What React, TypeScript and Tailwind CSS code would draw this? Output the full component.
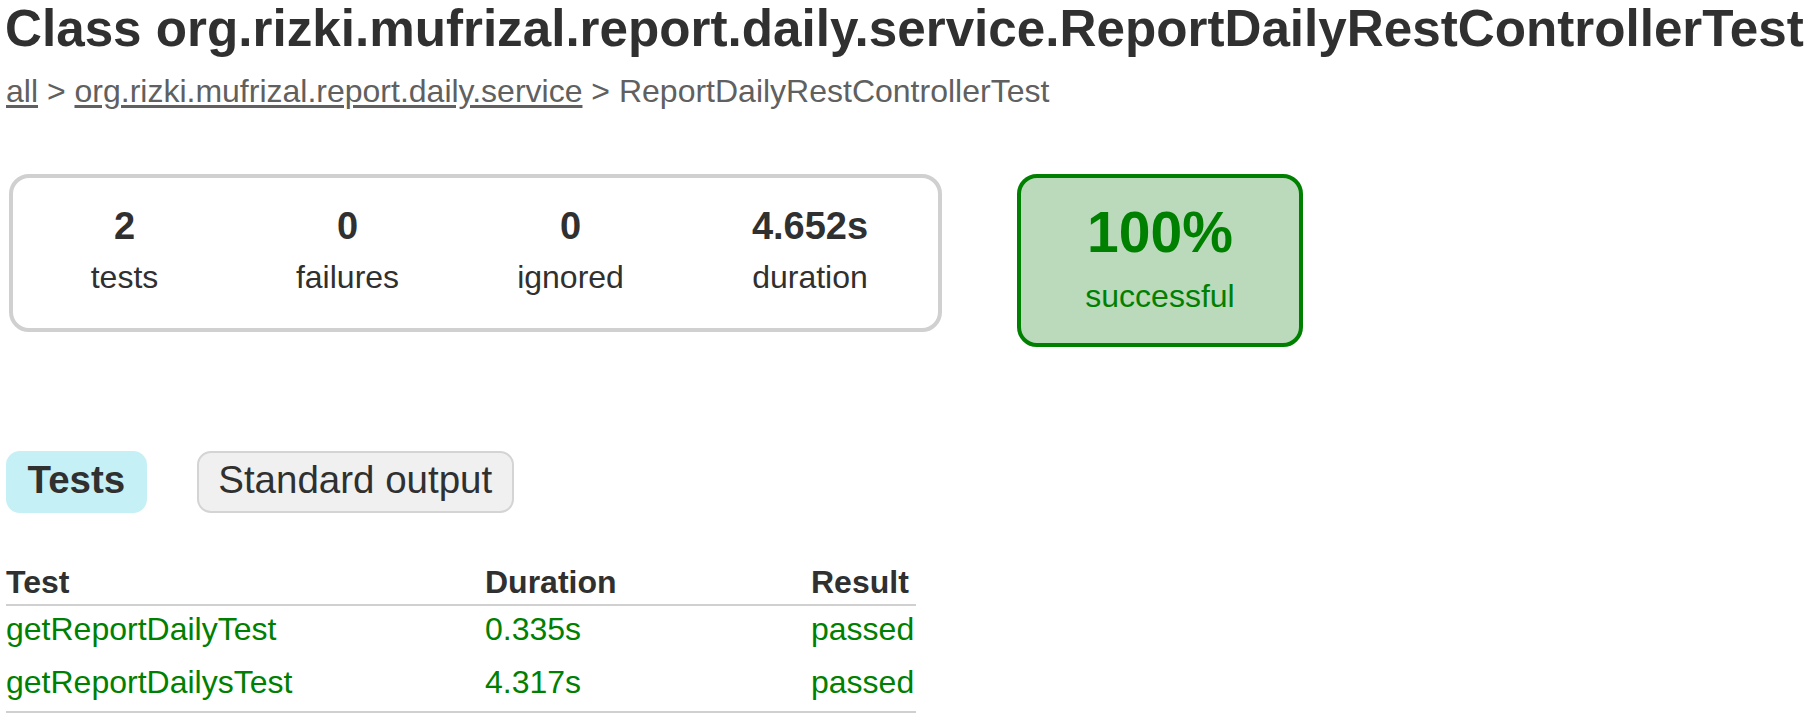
import React from "react";

const counters = [
    {value: "2", label: "tests", width: "w-[223px]"},
    {value: "0", label: "failures", width: "w-[223px]"},
    {value: "0", label: "ignored", width: "w-[223px]"},
    {value: "4.652s", label: "duration", width: "w-[256px]"},
];

const tests = [
    {name: "getReportDailyTest", duration: "0.335s", result: "passed"},
    {name: "getReportDailysTest", duration: "4.317s", result: "passed"},
];

const InfoBox = ({value, label, width}: {value: string; label: string; width: string}) => {
    return (
        <div className={`${width} text-center pt-[26px] pb-[33px]`}>
            <p className="text-[38px] leading-[44px] font-bold">{value}</p>
            <p className="mt-[11px] text-[32px] leading-[36px]">{label}</p>
        </div>
    );
};

const App = () => {
    return (
        <div className="min-h-screen bg-white pl-[6px] font-['Liberation_Sans',Arial,sans-serif] text-[#303030]">
            <h1 className="whitespace-nowrap text-[51.2px] leading-[58px] font-bold -ml-[1px]">
                Class org.rizki.mufrizal.report.daily.service.ReportDailyRestControllerTest
            </h1>

            <div className="mt-[15px] whitespace-nowrap text-[32px] leading-[36px] text-[#606060]">
                <a href="#" className="underline underline-offset-[3px]">all</a>
                {" > "}
                <a href="#" className="underline underline-offset-[3px]">org.rizki.mufrizal.report.daily.service</a>
                {" > "}ReportDailyRestControllerTest
            </div>

            {/* summary */}
            <div className="mt-[65px] flex items-start">
                <div className="ml-[3px] flex rounded-[20px] border-4 border-[#d0d0d0]">
                    {counters.map((c) => (
                        <InfoBox key={c.label} value={c.value} label={c.label} width={c.width}/>
                    ))}
                </div>
                <div className="ml-[75px] w-[286px] rounded-[20px] border-4 border-[#008000] bg-[#bbd9bb] pt-[21px] pb-[29px] text-center text-[#008000]">
                    <p className="text-[57px] leading-[66px] font-bold">100%</p>
                    <p className="mt-[13px] text-[32px] leading-[36px]">successful</p>
                </div>
            </div>

            {/* tabs */}
            <ul className="mt-[104px] flex">
                <li className="rounded-[14px] border-2 border-[#c5f0f5] bg-[#c5f0f5] px-[19.5px] pt-[6px] pb-[10px]">
                    <h2 className="text-[38.5px] leading-[42px] font-bold">Tests</h2>
                </li>
                <li className="ml-[50px] rounded-[14px] border-2 border-[#d4d4d4] bg-[#f0f0f0] px-[19.5px] pt-[6px] pb-[10px]">
                    <a href="#" className="text-[38.5px] leading-[42px]">Standard output</a>
                </li>
            </ul>

            {/* tests table */}
            <table className="mt-[51px] w-[910px] border-collapse text-left text-[32px] leading-[36px]">
                <thead>
                    <tr className="border-b-2 border-[#d0d0d0]">
                        <th className="w-[479px] p-0 pb-[4px] font-bold">Test</th>
                        <th className="w-[326px] p-0 pb-[4px] font-bold">Duration</th>
                        <th className="w-[105px] p-0 pb-[4px] font-bold">Result</th>
                    </tr>
                </thead>
                <tbody className="text-[#008000]">
                    {tests.map((t, i) => {
                        const last = i === tests.length - 1;
                        const cell = last ? "pt-[5px] pb-[11px]" : "pt-[5px] pb-[12px]";
                        return (
                            <tr key={t.name} className={last ? "border-b-2 border-[#d0d0d0]" : ""}>
                                <td className={cell}>{t.name}</td>
                                <td className={cell}>{t.duration}</td>
                                <td className={cell}>{t.result}</td>
                            </tr>
                        );
                    })}
                </tbody>
            </table>
        </div>
    );
};

export default App;
